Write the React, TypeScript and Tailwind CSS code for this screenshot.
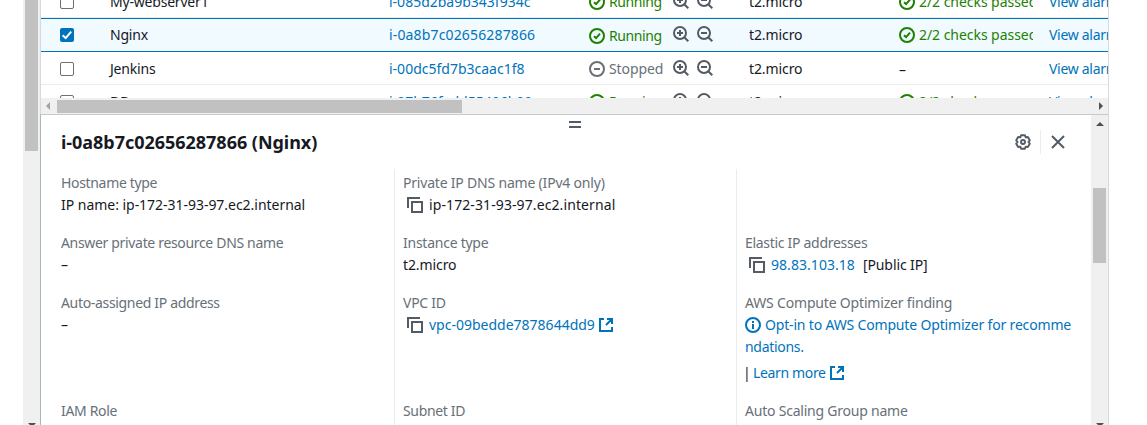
import type { ReactNode } from "react";

function Checkbox({ checked = false }: { checked?: boolean }) {
  return checked ? (
    <span className="block size-3.5 rounded-[2px] bg-[#0073bb]">
      <svg viewBox="0 0 14 14" className="block size-3.5" fill="none" stroke="#fff" strokeWidth="2">
        <path d="M2.6 7.2 5.7 10.1 11.2 3.6" />
      </svg>
    </span>
  ) : (
    <span className="block size-3.5 rounded-[2px] border border-[#687078] bg-white" />
  );
}

function StatusOk() {
  return (
    <svg viewBox="0 0 16 16" className="block size-4 shrink-0" fill="none" stroke="#1d8102" strokeWidth="2">
      <circle cx="8" cy="8" r="7" />
      <path d="M5 8.2 7.1 10.1 11 5.6" />
    </svg>
  );
}

function StatusStopped() {
  return (
    <svg viewBox="0 0 16 16" className="block size-4 shrink-0" fill="none" stroke="#687078" strokeWidth="2">
      <circle cx="8" cy="8" r="7" />
      <path d="M5 8h6" />
    </svg>
  );
}

function Zoom({ plus = false }: { plus?: boolean }) {
  return (
    <svg viewBox="0 0 16 16" className="block size-4 shrink-0" fill="none" stroke="#545b64" strokeWidth="2">
      <circle cx="7" cy="7" r="6" />
      <path d="M11.2 11.2 15.3 15.3M4 7h6" />
      {plus && <path d="M7 4v6" />}
    </svg>
  );
}

function Copy() {
  return (
    <svg viewBox="0 0 16 16" className="mr-1.5 ml-1 block size-4 shrink-0" fill="none" stroke="#545b64" strokeWidth="2">
      <path d="M1 11V1h12" />
      <rect x="5" y="5" width="10" height="10" />
    </svg>
  );
}

function External() {
  return (
    <svg viewBox="0 0 14 14" className="ml-1 block size-3.5 shrink-0" fill="none" stroke="#0073bb" strokeWidth="2">
      <path d="M5 1H1v12h12V9M8 1h5v5M13 1 7 7" />
    </svg>
  );
}

function Info() {
  return (
    <svg viewBox="0 0 16 16" className="mr-1 block size-4 shrink-0" fill="none" stroke="#0073bb" strokeWidth="2">
      <circle cx="8" cy="8" r="7" />
      <path d="M8 4v2M8 7v5" />
    </svg>
  );
}

type RowProps = { name: string; id: string; running?: boolean; selected?: boolean };

function InstanceRow({ name, id, running = false, selected = false }: RowProps) {
  return (
    <div
      className={
        selected
          ? "flex h-[34px] shrink-0 items-center border-y border-l border-[#0073bb] bg-[#f1faff]"
          : "flex h-[33px] shrink-0 items-center border-b border-[#eaeded] pt-0.5 pl-px"
      }
    >
      <div className="w-[69px] shrink-0 pl-[19px]">
        <Checkbox checked={selected} />
      </div>
      <div className="w-[279px] shrink-0 pb-0.5 tracking-[-0.2px]">{name}</div>
      <div
        className={
          selected
            ? "w-[200px] shrink-0 pb-0.5 tracking-[0.15px] text-[#0073bb]"
            : "w-[200px] shrink-0 pb-0.5 text-[#0073bb]"
        }
      >
        {id}
      </div>
      <div className="flex w-[160px] shrink-0 items-center">
        <span className={selected ? "mt-0.5 flex items-center" : "flex items-center"}>
          {running ? <StatusOk /> : <StatusStopped />}
          <span
            className={
              running
                ? "ml-1 w-16 pb-0.5 tracking-[-0.4px] text-[#1d8102]"
                : "ml-1 w-16 pb-0.5 tracking-[-0.1px] text-[#687078]"
            }
          >
            {running ? "Running" : "Stopped"}
          </span>
        </span>
        <span className="mb-[3px] flex gap-2">
          <Zoom plus />
          <Zoom />
        </span>
      </div>
      <div className="w-[150px] shrink-0 pb-0.5 tracking-[-0.1px]">t2.micro</div>
      <div className="flex w-[134px] shrink-0 items-center overflow-hidden">
        {running ? (
          <>
            <StatusOk />
            <span className="ml-1 pb-0.5 tracking-[-0.05px] whitespace-nowrap text-[#1d8102]">2/2 checks passed</span>
          </>
        ) : (
          "–"
        )}
      </div>
      <div className="ml-4 pb-0.5 tracking-[-0.3px] whitespace-nowrap text-[#0073bb]">View alarms</div>
    </div>
  );
}

function Field({ label, children }: { label: string; children?: ReactNode }) {
  return (
    <div className="leading-[22px]">
      <div className="text-[#687078]">{label}</div>
      {children && <div className="tracking-normal">{children}</div>}
    </div>
  );
}

function ArrowUp() {
  return (
    <svg viewBox="0 0 8 4" className="block h-1 w-2">
      <path d="M0 4 4 0 8 4Z" fill="#505050" />
    </svg>
  );
}

function ArrowDown() {
  return (
    <svg viewBox="0 0 8 4" className="block h-1 w-2">
      <path d="M0 0h8L4 4Z" fill="#505050" />
    </svg>
  );
}

export default function App() {
  return (
    <div className="flex h-[425px] w-[1147px] overflow-hidden bg-white pl-[23px] font-['Noto_Sans',sans-serif] text-[14px] text-[#16191f]">
      <div className="flex w-[17px] shrink-0 flex-col items-center justify-between bg-[#f0f0f0]">
        <div className="h-[151px] w-[13px] bg-[#c1c1c1]" />
        <div className="-mb-0.5">
          <ArrowDown />
        </div>
      </div>
      <div className="flex w-[1069px] shrink-0 flex-col border-r border-[#d5dbdb]">
        <div className="flex h-[98px] shrink-0 flex-col overflow-hidden border-l border-[#d5dbdb]">
          <div className="-mt-[15px] -ml-px flex flex-col">
            <InstanceRow name="My-webserver1" id="i-085d2ba9b343f934c" running />
            <InstanceRow name="Nginx" id="i-0a8b7c02656287866" running selected />
            <InstanceRow name="Jenkins" id="i-00dc5fd7b3caac1f8" />
            <InstanceRow name="DB" id="i-07b76fadd55496b00" running />
          </div>
        </div>
        <div className="flex h-4 shrink-0 items-center border-l border-[#d5dbdb] bg-[#f0f0f0]">
          <svg viewBox="0 0 4 8" className="ml-[5px] h-2 w-1">
            <path d="M4 0v8L0 4Z" fill="#a3a3a3" />
          </svg>
          <div className="ml-[7px] h-[13px] w-[405px] bg-[#c1c1c1]" />
          <svg viewBox="0 0 4 8" className="mr-[5px] ml-auto h-2 w-1">
            <path d="M0 0v8L4 4Z" fill="#505050" />
          </svg>
        </div>
        <div className="flex min-h-0 grow border-t border-l border-t-[#c5cbcb] border-l-[#aab7b8]">
          <div className="flex w-[1050px] flex-col">
            <div className="ml-[528px] flex h-[13px] shrink-0 flex-col gap-[3px] pt-[6px]">
              <span className="h-0.5 w-3 shrink-0 bg-[#545b64]" />
              <span className="h-0.5 w-3 shrink-0 bg-[#545b64]" />
            </div>
            <div className="flex h-7 shrink-0 items-center pl-5">
              <h2 className="text-[18px] leading-[22px] font-bold tracking-[-0.03px]">i-0a8b7c02656287866 (Nginx)</h2>
              <svg
                viewBox="0 0 16 16"
                className="ml-auto size-4"
                fill="none"
                stroke="#545b64"
                strokeWidth="1.9"
                strokeLinejoin="round"
              >
                <path d="M6.07 1.27 9.93 1.27 10.7 3.32 12.86 2.96 14.79 6.31 13.4 8 14.79 9.69 12.86 13.04 10.7 12.68 9.93 14.73 6.07 14.73 5.3 12.68 3.14 13.04 1.21 9.69 2.6 8 1.21 6.31 3.14 2.96 5.3 3.32Z" />
                <circle cx="8" cy="8" r="2" />
              </svg>
              <span className="mr-2.5 ml-[9px] h-6 w-px bg-[#eaeded]" />
              <svg viewBox="0 0 14 14" className="mr-[26px] size-3.5" fill="none" stroke="#545b64" strokeWidth="2">
                <path d="m1 1 12 12M13 1 1 13" />
              </svg>
            </div>
            <div className="mt-[13px] grid grow grid-cols-[353px_342px_1fr]">
              <div className="flex flex-col gap-4 pt-[3px] pl-5 tracking-[-0.33px]">
                <Field label="Hostname type">
                  <span className="tracking-[-0.03px]">IP name: ip-172-31-93-97.ec2.internal</span>
                </Field>
                <Field label="Answer private resource DNS name">–</Field>
                <Field label="Auto-assigned IP address">–</Field>
                <div className="mt-12">
                  <Field label="IAM Role" />
                </div>
              </div>
              <div className="flex flex-col gap-4 border-l border-[#eaeded] pt-[3px] pl-2 tracking-[-0.25px]">
                <div className="tracking-[-0.2px]">
                  <Field label="Private IP DNS name (IPv4 only)">
                    <div className="flex items-center tracking-[0.1px]">
                      <Copy />
                      ip-172-31-93-97.ec2.internal
                    </div>
                  </Field>
                </div>
                <Field label="Instance type">
                  <span className="tracking-[-0.1px]">t2.micro</span>
                </Field>
                <Field label="VPC ID">
                  <div className="flex items-center text-[#0073bb]">
                    <Copy />
                    vpc-09bedde7878644dd9
                    <External />
                  </div>
                </Field>
                <div className="mt-12 tracking-[-0.35px]">
                  <Field label="Subnet ID" />
                </div>
              </div>
              <div className="flex flex-col gap-4 border-l border-[#eaeded] pt-[63px] pl-2 tracking-[-0.22px]">
                <div className="tracking-[-0.3px]">
                  <Field label="Elastic IP addresses">
                    <div className="flex items-center">
                      <Copy />
                      <span className="tracking-[0.05px] text-[#0073bb]">98.83.103.18</span>
                      <span className="ml-2 tracking-[-0.1px]">[Public IP]</span>
                    </div>
                  </Field>
                </div>
                <div className="tracking-[-0.18px]">
                  <Field label="AWS Compute Optimizer finding">
                    <div className="flex items-center tracking-[-0.17px] whitespace-nowrap text-[#0073bb]">
                      <Info />
                      Opt-in to AWS Compute Optimizer for recomme
                    </div>
                    <div className="tracking-[-0.3px] text-[#0073bb]">ndations.</div>
                    <div className="mt-1 flex items-center tracking-[-0.35px]">
                      <span className="-ml-[2px] w-[10px]">|</span>
                      <span className="text-[#0073bb]">Learn more</span>
                      <External />
                    </div>
                  </Field>
                </div>
                <Field label="Auto Scaling Group name" />
              </div>
            </div>
          </div>
          <div className="flex w-[17px] shrink-0 flex-col items-center bg-[#f0f0f0]">
            <div className="mt-[7px]">
              <ArrowUp />
            </div>
            <div className="mt-[62px] h-[75px] w-[13px] bg-[#c1c1c1]" />
            <div className="mt-auto -mb-0.5">
              <ArrowDown />
            </div>
          </div>
        </div>
      </div>
    </div>
  );
}
